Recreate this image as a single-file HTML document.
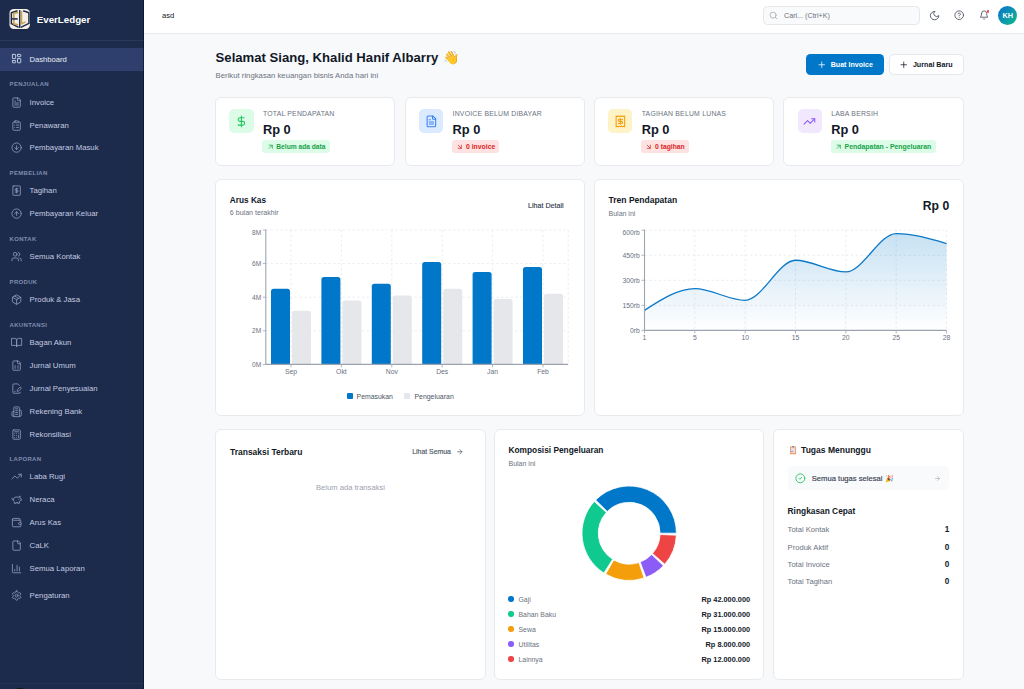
<!DOCTYPE html>
<html><head><meta charset="utf-8"><style>
html,body{margin:0;padding:0;}
body{width:1024px;height:689px;overflow:hidden;position:relative;background:#f8f9fb;font-family:"Liberation Sans",sans-serif;}
.t{position:absolute;white-space:nowrap;font-family:"Liberation Sans",sans-serif;}
svg{overflow:visible;}
</style></head><body>
<div style="position:absolute;left:0px;top:0px;width:144px;height:689px;box-sizing:border-box;background:#1c2a4b;"></div>
<div style="position:absolute;left:0px;top:40px;width:144px;height:1px;box-sizing:border-box;background:#2a3858;"></div>
<div style="position:absolute;left:0px;top:683px;width:144px;height:1px;box-sizing:border-box;background:#243253;"></div>
<div style="position:absolute;left:16px;top:687.5px;width:8px;height:3px;box-sizing:border-box;background:#141414;border-radius:50%;"></div>
<svg style="position:absolute;left:6px;top:6px" width="28" height="26" viewBox="0 0 742 689">
<rect x="92" y="78" width="543" height="532" rx="110" fill="#f4f0e6"/>
<path d="M305 128 L142 178 L142 468 L335 565" fill="none" stroke="#1d2b4d" stroke-width="40" stroke-linejoin="round"/>
<path d="M455 128 L608 178 L608 462 L392 568" fill="none" stroke="#1d2b4d" stroke-width="40" stroke-linejoin="round"/>
<rect x="345" y="108" width="38" height="474" fill="#1d2b4d"/>
<path d="M322 170 L208 198 L208 470 L322 500" fill="none" stroke="#c9a55a" stroke-width="44"/>
<rect x="160" y="322" width="150" height="40" fill="#1d2b4d"/>
<path d="M410 130 L410 470 L520 420" fill="none" stroke="#c9a55a" stroke-width="42"/>
</svg>
<div class="t" style="left:36.80px;top:15.00px;font-size:9.723px;line-height:9.723px;font-weight:700;color:#ffffff;letter-spacing:0px;">EverLedger</div>
<div style="position:absolute;left:0px;top:48px;width:144px;height:22.5px;box-sizing:border-box;background:#2e3f6e;"></div>
<svg style="position:absolute;left:11.2px;top:53.4px;" width="11.2" height="11.2" viewBox="0 0 24 24" fill="none" stroke="#c9d2e6" stroke-width="2" stroke-linecap="round" stroke-linejoin="round"><rect width="7" height="9" x="3" y="3" rx="1"/><rect width="7" height="5" x="14" y="3" rx="1"/><rect width="7" height="9" x="14" y="12" rx="1"/><rect width="7" height="5" x="3" y="16" rx="1"/></svg>
<div class="t" style="left:29.40px;top:56.00px;font-size:7.666px;line-height:7.666px;font-weight:400;color:#e8ecf5;letter-spacing:0px;">Dashboard</div>
<div class="t" style="left:9.60px;top:81.00px;font-size:6.000px;line-height:6.000px;font-weight:700;color:#7f8db0;letter-spacing:0.3px;">PENJUALAN</div>
<svg style="position:absolute;left:11.2px;top:97.2px;" width="11.2" height="11.2" viewBox="0 0 24 24" fill="none" stroke="#8e9bbd" stroke-width="1.8" stroke-linecap="round" stroke-linejoin="round"><path d="M15 2H6a2 2 0 0 0-2 2v16a2 2 0 0 0 2 2h12a2 2 0 0 0 2-2V7Z"/><path d="M14 2v4a2 2 0 0 0 2 2h4"/><path d="M10 9H8"/><path d="M16 13H8"/><path d="M16 17H8"/></svg>
<div class="t" style="left:29.60px;top:99.00px;font-size:7.750px;line-height:7.750px;font-weight:400;color:#c3cbe0;letter-spacing:0px;">Invoice</div>
<svg style="position:absolute;left:11.2px;top:119.8px;" width="11.2" height="11.2" viewBox="0 0 24 24" fill="none" stroke="#8e9bbd" stroke-width="1.8" stroke-linecap="round" stroke-linejoin="round"><rect width="8" height="4" x="8" y="2" rx="1" ry="1"/><path d="M16 4h2a2 2 0 0 1 2 2v14a2 2 0 0 1-2 2H6a2 2 0 0 1-2-2V6a2 2 0 0 1 2-2h2"/><path d="M12 11h4"/><path d="M12 16h4"/><path d="M8 11h.01"/><path d="M8 16h.01"/></svg>
<div class="t" style="left:29.60px;top:122.00px;font-size:7.750px;line-height:7.750px;font-weight:400;color:#c3cbe0;letter-spacing:0px;">Penawaran</div>
<svg style="position:absolute;left:11.2px;top:141.9px;" width="11.2" height="11.2" viewBox="0 0 24 24" fill="none" stroke="#8e9bbd" stroke-width="1.8" stroke-linecap="round" stroke-linejoin="round"><circle cx="12" cy="12" r="10"/><path d="M12 8v8"/><path d="m8 12 4 4 4-4"/></svg>
<div class="t" style="left:29.60px;top:144.00px;font-size:7.750px;line-height:7.750px;font-weight:400;color:#c3cbe0;letter-spacing:0px;">Pembayaran Masuk</div>
<div class="t" style="left:9.60px;top:170.00px;font-size:6.000px;line-height:6.000px;font-weight:700;color:#7f8db0;letter-spacing:0.3px;">PEMBELIAN</div>
<svg style="position:absolute;left:11.2px;top:185.2px;" width="11.2" height="11.2" viewBox="0 0 24 24" fill="none" stroke="#8e9bbd" stroke-width="1.8" stroke-linecap="round" stroke-linejoin="round"><rect x="4" y="2" width="16" height="20" rx="1"/><path d="M15 8h-4.5a1.8 1.8 0 1 0 0 3.6h3a1.8 1.8 0 1 1 0 3.6H9"/><path d="M12 17v-10"/></svg>
<div class="t" style="left:29.60px;top:187.00px;font-size:7.750px;line-height:7.750px;font-weight:400;color:#c3cbe0;letter-spacing:0px;">Tagihan</div>
<svg style="position:absolute;left:11.2px;top:208.4px;" width="11.2" height="11.2" viewBox="0 0 24 24" fill="none" stroke="#8e9bbd" stroke-width="1.8" stroke-linecap="round" stroke-linejoin="round"><circle cx="12" cy="12" r="10"/><path d="m16 12-4-4-4 4"/><path d="M12 16V8"/></svg>
<div class="t" style="left:29.60px;top:210.00px;font-size:7.750px;line-height:7.750px;font-weight:400;color:#c3cbe0;letter-spacing:0px;">Pembayaran Keluar</div>
<div class="t" style="left:9.60px;top:236.00px;font-size:6.000px;line-height:6.000px;font-weight:700;color:#7f8db0;letter-spacing:0.3px;">KONTAK</div>
<svg style="position:absolute;left:11.2px;top:251.20000000000002px;" width="11.2" height="11.2" viewBox="0 0 24 24" fill="none" stroke="#8e9bbd" stroke-width="1.8" stroke-linecap="round" stroke-linejoin="round"><path d="M16 21v-2a4 4 0 0 0-4-4H6a4 4 0 0 0-4 4v2"/><circle cx="9" cy="7" r="4"/><path d="M22 21v-2a4 4 0 0 0-3-3.87"/><path d="M16 3.13a4 4 0 0 1 0 7.75"/></svg>
<div class="t" style="left:29.60px;top:253.00px;font-size:7.750px;line-height:7.750px;font-weight:400;color:#c3cbe0;letter-spacing:0px;">Semua Kontak</div>
<div class="t" style="left:9.60px;top:279.00px;font-size:6.000px;line-height:6.000px;font-weight:700;color:#7f8db0;letter-spacing:0.3px;">PRODUK</div>
<svg style="position:absolute;left:11.2px;top:294.1px;" width="11.2" height="11.2" viewBox="0 0 24 24" fill="none" stroke="#8e9bbd" stroke-width="1.8" stroke-linecap="round" stroke-linejoin="round"><path d="m7.5 4.27 9 5.15"/><path d="M21 8a2 2 0 0 0-1-1.73l-7-4a2 2 0 0 0-2 0l-7 4A2 2 0 0 0 3 8v8a2 2 0 0 0 1 1.73l7 4a2 2 0 0 0 2 0l7-4A2 2 0 0 0 21 16Z"/><path d="m3.3 7 8.7 5 8.7-5"/><path d="M12 22V12"/></svg>
<div class="t" style="left:29.60px;top:296.00px;font-size:7.750px;line-height:7.750px;font-weight:400;color:#c3cbe0;letter-spacing:0px;">Produk &amp; Jasa</div>
<div class="t" style="left:9.60px;top:322.00px;font-size:6.000px;line-height:6.000px;font-weight:700;color:#7f8db0;letter-spacing:0.3px;">AKUNTANSI</div>
<svg style="position:absolute;left:11.2px;top:336.8px;" width="11.2" height="11.2" viewBox="0 0 24 24" fill="none" stroke="#8e9bbd" stroke-width="1.8" stroke-linecap="round" stroke-linejoin="round"><path d="M2 3h6a4 4 0 0 1 4 4v14a3 3 0 0 0-3-3H2z"/><path d="M22 3h-6a4 4 0 0 0-4 4v14a3 3 0 0 1 3-3h7z"/></svg>
<div class="t" style="left:29.60px;top:339.00px;font-size:7.750px;line-height:7.750px;font-weight:400;color:#c3cbe0;letter-spacing:0px;">Bagan Akun</div>
<svg style="position:absolute;left:11.2px;top:360.0px;" width="11.2" height="11.2" viewBox="0 0 24 24" fill="none" stroke="#8e9bbd" stroke-width="1.8" stroke-linecap="round" stroke-linejoin="round"><path d="M15 2H6a2 2 0 0 0-2 2v16a2 2 0 0 0 2 2h12a2 2 0 0 0 2-2V7Z"/><path d="M14 2v4a2 2 0 0 0 2 2h4"/><path d="M8 13h2"/><path d="M14 13h2"/><path d="M8 17h2"/><path d="M14 17h2"/></svg>
<div class="t" style="left:29.60px;top:362.00px;font-size:7.750px;line-height:7.750px;font-weight:400;color:#c3cbe0;letter-spacing:0px;">Jurnal Umum</div>
<svg style="position:absolute;left:11.2px;top:382.8px;" width="11.2" height="11.2" viewBox="0 0 24 24" fill="none" stroke="#8e9bbd" stroke-width="1.8" stroke-linecap="round" stroke-linejoin="round"><path d="m18 5-2.414-2.414A2 2 0 0 0 14.172 2H6a2 2 0 0 0-2 2v16a2 2 0 0 0 2 2h12a2 2 0 0 0 2-2"/><path d="M21.378 12.626a1 1 0 0 0-3.004-3.004l-4.01 4.012a2 2 0 0 0-.506.854l-.837 2.87a.5.5 0 0 0 .62.62l2.87-.837a2 2 0 0 0 .854-.506z"/><path d="M8 18h1"/></svg>
<div class="t" style="left:29.60px;top:385.00px;font-size:7.750px;line-height:7.750px;font-weight:400;color:#c3cbe0;letter-spacing:0px;">Jurnal Penyesuaian</div>
<svg style="position:absolute;left:11.2px;top:405.8px;" width="11.2" height="11.2" viewBox="0 0 24 24" fill="none" stroke="#8e9bbd" stroke-width="1.8" stroke-linecap="round" stroke-linejoin="round"><path d="M6 22V4a2 2 0 0 1 2-2h8a2 2 0 0 1 2 2v18Z"/><path d="M6 12H4a2 2 0 0 0-2 2v6a2 2 0 0 0 2 2h2"/><path d="M18 9h2a2 2 0 0 1 2 2v9a2 2 0 0 1-2 2h-2"/><path d="M10 6h4"/><path d="M10 10h4"/><path d="M10 14h4"/><path d="M10 18h4"/></svg>
<div class="t" style="left:29.60px;top:408.00px;font-size:7.750px;line-height:7.750px;font-weight:400;color:#c3cbe0;letter-spacing:0px;">Rekening Bank</div>
<svg style="position:absolute;left:11.2px;top:428.6px;" width="11.2" height="11.2" viewBox="0 0 24 24" fill="none" stroke="#8e9bbd" stroke-width="1.8" stroke-linecap="round" stroke-linejoin="round"><rect width="16" height="20" x="4" y="2" rx="2"/><line x1="8" x2="16" y1="6" y2="6"/><line x1="16" x2="16" y1="14" y2="18"/><path d="M16 10h.01"/><path d="M12 10h.01"/><path d="M8 10h.01"/><path d="M12 14h.01"/><path d="M8 14h.01"/><path d="M12 18h.01"/><path d="M8 18h.01"/></svg>
<div class="t" style="left:29.60px;top:431.00px;font-size:7.750px;line-height:7.750px;font-weight:400;color:#c3cbe0;letter-spacing:0px;">Rekonsiliasi</div>
<div class="t" style="left:9.60px;top:456.00px;font-size:6.000px;line-height:6.000px;font-weight:700;color:#7f8db0;letter-spacing:0.3px;">LAPORAN</div>
<svg style="position:absolute;left:11.2px;top:470.9px;" width="11.2" height="11.2" viewBox="0 0 24 24" fill="none" stroke="#8e9bbd" stroke-width="1.8" stroke-linecap="round" stroke-linejoin="round"><polyline points="22 7 13.5 15.5 8.5 10.5 2 17"/><polyline points="16 7 22 7 22 13"/></svg>
<div class="t" style="left:29.60px;top:473.00px;font-size:7.750px;line-height:7.750px;font-weight:400;color:#c3cbe0;letter-spacing:0px;">Laba Rugi</div>
<svg style="position:absolute;left:11.2px;top:494.2px;" width="11.2" height="11.2" viewBox="0 0 24 24" fill="none" stroke="#8e9bbd" stroke-width="1.8" stroke-linecap="round" stroke-linejoin="round"><path d="M19 5c-1.5 0-2.8 1.4-3 2-3.5-1.5-11-.3-11 5 0 1.8 0 3 2 4.5V20h4v-2h3v2h4v-4c1-.5 1.700-1 2-2h2v-4h-2c0-1-.5-1.5-1-2V5z"/><path d="M2 9v1c0 1.1.9 2 2 2h1"/><path d="M16 11h.01"/></svg>
<div class="t" style="left:29.60px;top:496.00px;font-size:7.750px;line-height:7.750px;font-weight:400;color:#c3cbe0;letter-spacing:0px;">Neraca</div>
<svg style="position:absolute;left:11.2px;top:517.1px;" width="11.2" height="11.2" viewBox="0 0 24 24" fill="none" stroke="#8e9bbd" stroke-width="1.8" stroke-linecap="round" stroke-linejoin="round"><path d="M19 7V4a1 1 0 0 0-1-1H5a2 2 0 0 0 0 4h15a1 1 0 0 1 1 1v4h-3a2 2 0 0 0 0 4h3a1 1 0 0 0 1-1v-2a1 1 0 0 0-1-1"/><path d="M3 5v14a2 2 0 0 0 2 2h15a1 1 0 0 0 1-1v-4"/></svg>
<div class="t" style="left:29.60px;top:519.00px;font-size:7.750px;line-height:7.750px;font-weight:400;color:#c3cbe0;letter-spacing:0px;">Arus Kas</div>
<svg style="position:absolute;left:11.2px;top:540.1px;" width="11.2" height="11.2" viewBox="0 0 24 24" fill="none" stroke="#8e9bbd" stroke-width="1.8" stroke-linecap="round" stroke-linejoin="round"><path d="M15 2H6a2 2 0 0 0-2 2v16a2 2 0 0 0 2 2h12a2 2 0 0 0 2-2V7Z"/><path d="M14 2v4a2 2 0 0 0 2 2h4"/></svg>
<div class="t" style="left:29.60px;top:542.00px;font-size:7.750px;line-height:7.750px;font-weight:400;color:#c3cbe0;letter-spacing:0px;">CaLK</div>
<svg style="position:absolute;left:11.2px;top:563.0px;" width="11.2" height="11.2" viewBox="0 0 24 24" fill="none" stroke="#8e9bbd" stroke-width="1.8" stroke-linecap="round" stroke-linejoin="round"><path d="M3 3v16a2 2 0 0 0 2 2h16"/><path d="M18 17V9"/><path d="M13 17V5"/><path d="M8 17v-3"/></svg>
<div class="t" style="left:29.60px;top:565.00px;font-size:7.750px;line-height:7.750px;font-weight:400;color:#c3cbe0;letter-spacing:0px;">Semua Laporan</div>
<svg style="position:absolute;left:11.2px;top:589.9px;" width="11.2" height="11.2" viewBox="0 0 24 24" fill="none" stroke="#8e9bbd" stroke-width="1.8" stroke-linecap="round" stroke-linejoin="round"><path d="M12.22 2h-.44a2 2 0 0 0-2 2v.18a2 2 0 0 1-1 1.73l-.43.25a2 2 0 0 1-2 0l-.15-.08a2 2 0 0 0-2.730.73l-.22.38a2 2 0 0 0 .73 2.730l.15.1a2 2 0 0 1 1 1.72v.51a2 2 0 0 1-1 1.74l-.15.09a2 2 0 0 0-.73 2.73l.22.38a2 2 0 0 0 2.73.73l.15-.08a2 2 0 0 1 2 0l.43.25a2 2 0 0 1 1 1.73V20a2 2 0 0 0 2 2h.44a2 2 0 0 0 2-2v-.18a2 2 0 0 1 1-1.73l.43-.25a2 2 0 0 1 2 0l.15.08a2 2 0 0 0 2.73-.73l.22-.39a2 2 0 0 0-.73-2.73l-.15-.08a2 2 0 0 1-1-1.74v-.5a2 2 0 0 1 1-1.74l.15-.09a2 2 0 0 0 .73-2.73l-.22-.38a2 2 0 0 0-2.73-.73l-.15.08a2 2 0 0 1-2 0l-.43-.25a2 2 0 0 1-1-1.73V4a2 2 0 0 0-2-2z"/><circle cx="12" cy="12" r="3"/></svg>
<div class="t" style="left:29.60px;top:592.00px;font-size:7.750px;line-height:7.750px;font-weight:400;color:#c3cbe0;letter-spacing:0px;">Pengaturan</div>
<div style="position:absolute;left:143px;top:0px;width:1px;height:689px;box-sizing:border-box;background:rgba(4,10,30,0.55);"></div>
<div style="position:absolute;left:144px;top:0px;width:880px;height:33px;box-sizing:border-box;background:#ffffff;"></div>
<div style="position:absolute;left:144px;top:33px;width:880px;height:1px;box-sizing:border-box;background:#e9ebef;"></div>
<div style="position:absolute;left:144px;top:34px;width:880px;height:655px;box-sizing:border-box;background:#f8f9fb;"></div>
<div class="t" style="left:162.00px;top:12.00px;font-size:7.600px;line-height:7.600px;font-weight:400;color:#111827;letter-spacing:0px;">asd</div>
<div style="position:absolute;left:763px;top:6px;width:156.5px;height:18.6px;box-sizing:border-box;background:#f9fafb;border:1px solid #e5e7eb;border-radius:4.5px;"></div>
<svg style="position:absolute;left:768.8px;top:11px;" width="9" height="9" viewBox="0 0 24 24" fill="none" stroke="#9ca3af" stroke-width="2" stroke-linecap="round" stroke-linejoin="round"><circle cx="11" cy="11" r="8"/><path d="m21 21-4.3-4.3"/></svg>
<div class="t" style="left:784.00px;top:13.00px;font-size:7.169px;line-height:7.169px;font-weight:400;color:#6b7280;letter-spacing:0px;">Cari... (Ctrl+K)</div>
<svg style="position:absolute;left:928.5px;top:9.5px;" width="11.2" height="11.2" viewBox="0 0 24 24" fill="none" stroke="#4b5563" stroke-width="2" stroke-linecap="round" stroke-linejoin="round"><path d="M12 3a6 6 0 0 0 9 9 9 9 0 1 1-9-9Z"/></svg>
<svg style="position:absolute;left:953.9px;top:10.3px;" width="10.4" height="10.4" viewBox="0 0 24 24" fill="none" stroke="#4b5563" stroke-width="2" stroke-linecap="round" stroke-linejoin="round"><circle cx="12" cy="12" r="10"/><path d="M9.09 9a3 3 0 0 1 5.83 1c0 2-3 3-3 3"/><path d="M12 17h.01"/></svg>
<svg style="position:absolute;left:978.8px;top:10.4px;" width="10.2" height="10.2" viewBox="0 0 24 24" fill="none" stroke="#4b5563" stroke-width="2" stroke-linecap="round" stroke-linejoin="round"><path d="M6 8a6 6 0 0 1 12 0c0 7 3 9 3 9H3s3-2 3-9"/><path d="M10.3 21a1.94 1.94 0 0 0 3.4 0"/></svg>
<div style="position:absolute;left:986.8px;top:10.0px;width:2.5px;height:2.5px;box-sizing:border-box;background:#ef4444;border-radius:50%;"></div>
<div style="position:absolute;left:998.1px;top:5.8px;width:19.2px;height:19.2px;box-sizing:border-box;background:linear-gradient(135deg,#0a6fd0 0%,#0ea5a0 70%,#10b981 100%);border-radius:50%;"></div>
<div class="t" style="left:1002.43px;top:12.00px;font-size:7.300px;line-height:7.300px;font-weight:700;color:#ffffff;letter-spacing:0px;">KH</div>
<div class="t" style="left:215.60px;top:51.00px;font-size:13.143px;line-height:13.143px;font-weight:700;color:#111827;letter-spacing:0px;">Selamat Siang, Khalid Hanif Albarry</div>
<div class="t" style="left:443px;top:49.5px;font-size:13.3px;line-height:16px;">&#128075;</div>
<div class="t" style="left:215.60px;top:72.00px;font-size:7.743px;line-height:7.743px;font-weight:400;color:#6b7280;letter-spacing:0px;">Berikut ringkasan keuangan bisnis Anda hari ini</div>
<div style="position:absolute;left:806.1px;top:54px;width:77.7px;height:20.9px;box-sizing:border-box;background:#0077c8;border-radius:4.5px;"></div>
<svg style="position:absolute;left:816.5px;top:59.9px;" width="9.5" height="9.5" viewBox="0 0 24 24" fill="none" stroke="#ffffff" stroke-width="1.9" stroke-linecap="round" stroke-linejoin="round"><path d="M5 12h14"/><path d="M12 5v14"/></svg>
<div class="t" style="left:830.70px;top:62.00px;font-size:7.115px;line-height:7.115px;font-weight:700;color:#ffffff;letter-spacing:0px;">Buat Invoice</div>
<div style="position:absolute;left:888.5px;top:54px;width:75.5px;height:21px;box-sizing:border-box;background:#ffffff;border:1px solid #e5e7eb;border-radius:4.5px;"></div>
<svg style="position:absolute;left:898.8px;top:59.9px;" width="9.5" height="9.5" viewBox="0 0 24 24" fill="none" stroke="#111827" stroke-width="1.9" stroke-linecap="round" stroke-linejoin="round"><path d="M5 12h14"/><path d="M12 5v14"/></svg>
<div class="t" style="left:912.90px;top:62.00px;font-size:7.162px;line-height:7.162px;font-weight:700;color:#111827;letter-spacing:0px;">Jurnal Baru</div>
<div style="position:absolute;left:215px;top:97px;width:180.05px;height:69px;box-sizing:border-box;background:#ffffff;border:1px solid #e8eaee;border-radius:6px;"></div>
<div style="position:absolute;left:229.3px;top:108.7px;width:24.4px;height:24.4px;box-sizing:border-box;background:#dcfce7;border-radius:5px;"></div>
<svg style="position:absolute;left:235.10000000000002px;top:114.5px;" width="12.8" height="12.8" viewBox="0 0 24 24" fill="none" stroke="#22c55e" stroke-width="2" stroke-linecap="round" stroke-linejoin="round"><line x1="12" x2="12" y1="2" y2="22"/><path d="M17 5H9.5a3.5 3.5 0 0 0 0 7h5a3.5 3.5 0 0 1 0 7H6"/></svg>
<div class="t" style="left:262.90px;top:111.00px;font-size:6.900px;line-height:6.900px;font-weight:400;color:#6b7280;letter-spacing:0.2px;">TOTAL PENDAPATAN</div>
<div class="t" style="left:262.90px;top:124.00px;font-size:12.830px;line-height:12.830px;font-weight:700;color:#111827;letter-spacing:0px;">Rp 0</div>
<div style="position:absolute;left:262.4px;top:140px;width:67.3px;height:12.6px;box-sizing:border-box;background:#dcfce7;border-radius:3px;"></div>
<svg style="position:absolute;left:266.5px;top:142.5px;" width="7.5" height="7.5" viewBox="0 0 24 24" fill="none" stroke="#16a34a" stroke-width="2.4" stroke-linecap="round" stroke-linejoin="round"><path d="M7 7h10v10"/><path d="M7 17 17 7"/></svg>
<div class="t" style="left:276.30px;top:144.00px;font-size:6.671px;line-height:6.671px;font-weight:700;color:#16a34a;letter-spacing:0px;">Belum ada data</div>
<div style="position:absolute;left:404.65px;top:97px;width:180.05px;height:69px;box-sizing:border-box;background:#ffffff;border:1px solid #e8eaee;border-radius:6px;"></div>
<div style="position:absolute;left:418.95px;top:108.7px;width:24.4px;height:24.4px;box-sizing:border-box;background:#dbeafe;border-radius:5px;"></div>
<svg style="position:absolute;left:424.75px;top:114.5px;" width="12.8" height="12.8" viewBox="0 0 24 24" fill="none" stroke="#3b82f6" stroke-width="2" stroke-linecap="round" stroke-linejoin="round"><path d="M15 2H6a2 2 0 0 0-2 2v16a2 2 0 0 0 2 2h12a2 2 0 0 0 2-2V7Z"/><path d="M14 2v4a2 2 0 0 0 2 2h4"/><path d="M10 9H8"/><path d="M16 13H8"/><path d="M16 17H8"/></svg>
<div class="t" style="left:452.55px;top:111.00px;font-size:6.900px;line-height:6.900px;font-weight:400;color:#6b7280;letter-spacing:0.2px;">INVOICE BELUM DIBAYAR</div>
<div class="t" style="left:452.55px;top:124.00px;font-size:12.830px;line-height:12.830px;font-weight:700;color:#111827;letter-spacing:0px;">Rp 0</div>
<div style="position:absolute;left:452.04999999999995px;top:140px;width:47.4px;height:12.6px;box-sizing:border-box;background:#fee2e2;border-radius:3px;"></div>
<svg style="position:absolute;left:456.15px;top:142.5px;" width="7.5" height="7.5" viewBox="0 0 24 24" fill="none" stroke="#dc2626" stroke-width="2.4" stroke-linecap="round" stroke-linejoin="round"><path d="m7 7 10 10"/><path d="M17 7v10H7"/></svg>
<div class="t" style="left:465.95px;top:144.00px;font-size:6.870px;line-height:6.870px;font-weight:700;color:#dc2626;letter-spacing:0px;">0 invoice</div>
<div style="position:absolute;left:593.8px;top:97px;width:180.3px;height:69px;box-sizing:border-box;background:#ffffff;border:1px solid #e8eaee;border-radius:6px;"></div>
<div style="position:absolute;left:608.0999999999999px;top:108.7px;width:24.4px;height:24.4px;box-sizing:border-box;background:#fef3c7;border-radius:5px;"></div>
<svg style="position:absolute;left:613.8999999999999px;top:114.5px;" width="12.8" height="12.8" viewBox="0 0 24 24" fill="none" stroke="#f59e0b" stroke-width="2" stroke-linecap="round" stroke-linejoin="round"><path d="M4 2v20l2-1 2 1 2-1 2 1 2-1 2 1 2-1 2 1V2l-2 1-2-1-2 1-2-1-2 1-2-1-2 1Z"/><path d="M16 8h-6a2 2 0 1 0 0 4h4a2 2 0 1 1 0 4H8"/><path d="M12 17.5v-11"/></svg>
<div class="t" style="left:641.70px;top:111.00px;font-size:6.900px;line-height:6.900px;font-weight:400;color:#6b7280;letter-spacing:0.2px;">TAGIHAN BELUM LUNAS</div>
<div class="t" style="left:641.70px;top:124.00px;font-size:12.830px;line-height:12.830px;font-weight:700;color:#111827;letter-spacing:0px;">Rp 0</div>
<div style="position:absolute;left:641.1999999999999px;top:140px;width:47.7px;height:12.6px;box-sizing:border-box;background:#fee2e2;border-radius:3px;"></div>
<svg style="position:absolute;left:645.3px;top:142.5px;" width="7.5" height="7.5" viewBox="0 0 24 24" fill="none" stroke="#dc2626" stroke-width="2.4" stroke-linecap="round" stroke-linejoin="round"><path d="m7 7 10 10"/><path d="M17 7v10H7"/></svg>
<div class="t" style="left:655.10px;top:144.00px;font-size:6.767px;line-height:6.767px;font-weight:700;color:#dc2626;letter-spacing:0px;">0 tagihan</div>
<div style="position:absolute;left:783.3px;top:97px;width:180.7px;height:69px;box-sizing:border-box;background:#ffffff;border:1px solid #e8eaee;border-radius:6px;"></div>
<div style="position:absolute;left:797.5999999999999px;top:108.7px;width:24.4px;height:24.4px;box-sizing:border-box;background:#f1e8fe;border-radius:5px;"></div>
<svg style="position:absolute;left:803.3999999999999px;top:114.5px;" width="12.8" height="12.8" viewBox="0 0 24 24" fill="none" stroke="#8b5cf6" stroke-width="2" stroke-linecap="round" stroke-linejoin="round"><polyline points="22 7 13.5 15.5 8.5 10.5 2 17"/><polyline points="16 7 22 7 22 13"/></svg>
<div class="t" style="left:831.20px;top:111.00px;font-size:6.900px;line-height:6.900px;font-weight:400;color:#6b7280;letter-spacing:0.2px;">LABA BERSIH</div>
<div class="t" style="left:831.20px;top:124.00px;font-size:12.830px;line-height:12.830px;font-weight:700;color:#111827;letter-spacing:0px;">Rp 0</div>
<div style="position:absolute;left:830.6999999999999px;top:140px;width:105px;height:12.6px;box-sizing:border-box;background:#dcfce7;border-radius:3px;"></div>
<svg style="position:absolute;left:834.8px;top:142.5px;" width="7.5" height="7.5" viewBox="0 0 24 24" fill="none" stroke="#16a34a" stroke-width="2.4" stroke-linecap="round" stroke-linejoin="round"><path d="M7 7h10v10"/><path d="M7 17 17 7"/></svg>
<div class="t" style="left:844.60px;top:144.00px;font-size:6.928px;line-height:6.928px;font-weight:700;color:#16a34a;letter-spacing:0px;">Pendapatan - Pengeluaran</div>
<div style="position:absolute;left:215px;top:179px;width:369.7px;height:237px;box-sizing:border-box;background:#ffffff;border:1px solid #e8eaee;border-radius:6px;"></div>
<div style="position:absolute;left:594.3px;top:179px;width:369.7px;height:237px;box-sizing:border-box;background:#ffffff;border:1px solid #e8eaee;border-radius:6px;"></div>
<div class="t" style="left:229.80px;top:197.00px;font-size:8.268px;line-height:8.268px;font-weight:700;color:#111827;letter-spacing:0px;">Arus Kas</div>
<div class="t" style="left:229.80px;top:210.00px;font-size:7.080px;line-height:7.080px;font-weight:400;color:#6b7280;letter-spacing:0px;">6 bulan terakhir</div>
<div class="t" style="left:528.00px;top:203.00px;font-size:7.116px;line-height:7.116px;font-weight:400;color:#374151;letter-spacing:0px;-webkit-text-stroke:0.15px #374151;">Lihat Detail</div>
<svg style="position:absolute;left:0;top:0" width="1024" height="689" viewBox="0 0 1024 689"><line x1="265.8" y1="230.0" x2="568.2" y2="230.0" stroke="#e6e8eb" stroke-width="0.8" stroke-dasharray="2.4 2.4"/><line x1="262.8" y1="230.0" x2="265.8" y2="230.0" stroke="#9ca3af" stroke-width="0.8"/><line x1="265.8" y1="263.6" x2="568.2" y2="263.6" stroke="#e6e8eb" stroke-width="0.8" stroke-dasharray="2.4 2.4"/><line x1="262.8" y1="263.6" x2="265.8" y2="263.6" stroke="#9ca3af" stroke-width="0.8"/><line x1="265.8" y1="297.2" x2="568.2" y2="297.2" stroke="#e6e8eb" stroke-width="0.8" stroke-dasharray="2.4 2.4"/><line x1="262.8" y1="297.2" x2="265.8" y2="297.2" stroke="#9ca3af" stroke-width="0.8"/><line x1="265.8" y1="330.79999999999995" x2="568.2" y2="330.79999999999995" stroke="#e6e8eb" stroke-width="0.8" stroke-dasharray="2.4 2.4"/><line x1="262.8" y1="330.79999999999995" x2="265.8" y2="330.79999999999995" stroke="#9ca3af" stroke-width="0.8"/><line x1="262.8" y1="364.4" x2="265.8" y2="364.4" stroke="#9ca3af" stroke-width="0.8"/><line x1="291.0" y1="230.0" x2="291.0" y2="364.4" stroke="#e6e8eb" stroke-width="0.8" stroke-dasharray="2.4 2.4"/><line x1="341.40000000000003" y1="230.0" x2="341.40000000000003" y2="364.4" stroke="#e6e8eb" stroke-width="0.8" stroke-dasharray="2.4 2.4"/><line x1="391.8" y1="230.0" x2="391.8" y2="364.4" stroke="#e6e8eb" stroke-width="0.8" stroke-dasharray="2.4 2.4"/><line x1="442.20000000000005" y1="230.0" x2="442.20000000000005" y2="364.4" stroke="#e6e8eb" stroke-width="0.8" stroke-dasharray="2.4 2.4"/><line x1="492.6" y1="230.0" x2="492.6" y2="364.4" stroke="#e6e8eb" stroke-width="0.8" stroke-dasharray="2.4 2.4"/><line x1="543.0" y1="230.0" x2="543.0" y2="364.4" stroke="#e6e8eb" stroke-width="0.8" stroke-dasharray="2.4 2.4"/><line x1="568.2" y1="230.0" x2="568.2" y2="364.4" stroke="#e6e8eb" stroke-width="0.8" stroke-dasharray="2.4 2.4"/><path d="M271.00,364.40 L271.00,291.40 Q271.00,288.80 273.60,288.80 L287.40,288.80 Q290.00,288.80 290.00,291.40 L290.00,364.40 Z" fill="#0077c8"/><path d="M292.00,364.40 L292.00,313.24 Q292.00,310.64 294.60,310.64 L308.40,310.64 Q311.00,310.64 311.00,313.24 L311.00,364.40 Z" fill="#e5e7eb"/><path d="M321.40,364.40 L321.40,279.64 Q321.40,277.04 324.00,277.04 L337.80,277.04 Q340.40,277.04 340.40,279.64 L340.40,364.40 Z" fill="#0077c8"/><path d="M342.40,364.40 L342.40,303.16 Q342.40,300.56 345.00,300.56 L358.80,300.56 Q361.40,300.56 361.40,303.16 L361.40,364.40 Z" fill="#e5e7eb"/><path d="M371.80,364.40 L371.80,286.36 Q371.80,283.76 374.40,283.76 L388.20,283.76 Q390.80,283.76 390.80,286.36 L390.80,364.40 Z" fill="#0077c8"/><path d="M392.80,364.40 L392.80,298.12 Q392.80,295.52 395.40,295.52 L409.20,295.52 Q411.80,295.52 411.80,298.12 L411.80,364.40 Z" fill="#e5e7eb"/><path d="M422.20,364.40 L422.20,264.52 Q422.20,261.92 424.80,261.92 L438.60,261.92 Q441.20,261.92 441.20,264.52 L441.20,364.40 Z" fill="#0077c8"/><path d="M443.20,364.40 L443.20,291.40 Q443.20,288.80 445.80,288.80 L459.60,288.80 Q462.20,288.80 462.20,291.40 L462.20,364.40 Z" fill="#e5e7eb"/><path d="M472.60,364.40 L472.60,274.60 Q472.60,272.00 475.20,272.00 L489.00,272.00 Q491.60,272.00 491.60,274.60 L491.60,364.40 Z" fill="#0077c8"/><path d="M493.60,364.40 L493.60,301.48 Q493.60,298.88 496.20,298.88 L510.00,298.88 Q512.60,298.88 512.60,301.48 L512.60,364.40 Z" fill="#e5e7eb"/><path d="M523.00,364.40 L523.00,269.56 Q523.00,266.96 525.60,266.96 L539.40,266.96 Q542.00,266.96 542.00,269.56 L542.00,364.40 Z" fill="#0077c8"/><path d="M544.00,364.40 L544.00,296.44 Q544.00,293.84 546.60,293.84 L560.40,293.84 Q563.00,293.84 563.00,296.44 L563.00,364.40 Z" fill="#e5e7eb"/><line x1="291.0" y1="364.4" x2="291.0" y2="367.4" stroke="#9ca3af" stroke-width="0.8"/><line x1="341.40000000000003" y1="364.4" x2="341.40000000000003" y2="367.4" stroke="#9ca3af" stroke-width="0.8"/><line x1="391.8" y1="364.4" x2="391.8" y2="367.4" stroke="#9ca3af" stroke-width="0.8"/><line x1="442.20000000000005" y1="364.4" x2="442.20000000000005" y2="367.4" stroke="#9ca3af" stroke-width="0.8"/><line x1="492.6" y1="364.4" x2="492.6" y2="367.4" stroke="#9ca3af" stroke-width="0.8"/><line x1="543.0" y1="364.4" x2="543.0" y2="367.4" stroke="#9ca3af" stroke-width="0.8"/><line x1="265.8" y1="229.4" x2="265.8" y2="364.4" stroke="#9ca3af" stroke-width="1.1"/><line x1="265.8" y1="364.4" x2="568.2" y2="364.4" stroke="#9ca3af" stroke-width="1.1"/><line x1="644.5" y1="230.2" x2="946.5" y2="230.2" stroke="#e6e8eb" stroke-width="0.8" stroke-dasharray="2.4 2.4"/><line x1="641.5" y1="230.2" x2="644.5" y2="230.2" stroke="#9ca3af" stroke-width="0.8"/><line x1="644.5" y1="255.25" x2="946.5" y2="255.25" stroke="#e6e8eb" stroke-width="0.8" stroke-dasharray="2.4 2.4"/><line x1="641.5" y1="255.25" x2="644.5" y2="255.25" stroke="#9ca3af" stroke-width="0.8"/><line x1="644.5" y1="280.29999999999995" x2="946.5" y2="280.29999999999995" stroke="#e6e8eb" stroke-width="0.8" stroke-dasharray="2.4 2.4"/><line x1="641.5" y1="280.29999999999995" x2="644.5" y2="280.29999999999995" stroke="#9ca3af" stroke-width="0.8"/><line x1="644.5" y1="305.34999999999997" x2="946.5" y2="305.34999999999997" stroke="#e6e8eb" stroke-width="0.8" stroke-dasharray="2.4 2.4"/><line x1="641.5" y1="305.34999999999997" x2="644.5" y2="305.34999999999997" stroke="#9ca3af" stroke-width="0.8"/><line x1="641.5" y1="330.4" x2="644.5" y2="330.4" stroke="#9ca3af" stroke-width="0.8"/><line x1="694.8333333333334" y1="230.2" x2="694.8333333333334" y2="330.4" stroke="#e6e8eb" stroke-width="0.8" stroke-dasharray="2.4 2.4"/><line x1="745.1666666666666" y1="230.2" x2="745.1666666666666" y2="330.4" stroke="#e6e8eb" stroke-width="0.8" stroke-dasharray="2.4 2.4"/><line x1="795.5" y1="230.2" x2="795.5" y2="330.4" stroke="#e6e8eb" stroke-width="0.8" stroke-dasharray="2.4 2.4"/><line x1="845.8333333333334" y1="230.2" x2="845.8333333333334" y2="330.4" stroke="#e6e8eb" stroke-width="0.8" stroke-dasharray="2.4 2.4"/><line x1="896.1666666666667" y1="230.2" x2="896.1666666666667" y2="330.4" stroke="#e6e8eb" stroke-width="0.8" stroke-dasharray="2.4 2.4"/><line x1="946.5" y1="230.2" x2="946.5" y2="330.4" stroke="#e6e8eb" stroke-width="0.8" stroke-dasharray="2.4 2.4"/><defs><linearGradient id="lg" x1="0" y1="0" x2="0" y2="1"><stop offset="0%" stop-color="#0077c8" stop-opacity="0.22"/><stop offset="100%" stop-color="#0077c8" stop-opacity="0.0"/></linearGradient></defs><path d="M644.50,310.36 C661.28,299.50 678.06,288.65 694.83,288.65 C711.61,288.65 728.39,300.34 745.17,300.34 C761.94,300.34 778.72,260.26 795.50,260.26 C812.28,260.26 829.06,271.95 845.83,271.95 C862.61,271.95 879.39,233.54 896.17,233.54 C912.94,233.54 929.72,238.55 946.50,243.56 L946.5,330.4 L644.5,330.4 Z" fill="url(#lg)"/><path d="M644.50,310.36 C661.28,299.50 678.06,288.65 694.83,288.65 C711.61,288.65 728.39,300.34 745.17,300.34 C761.94,300.34 778.72,260.26 795.50,260.26 C812.28,260.26 829.06,271.95 845.83,271.95 C862.61,271.95 879.39,233.54 896.17,233.54 C912.94,233.54 929.72,238.55 946.50,243.56" fill="none" stroke="#0a78c8" stroke-width="1.3"/><line x1="644.5" y1="330.4" x2="644.5" y2="333.4" stroke="#9ca3af" stroke-width="0.8"/><line x1="694.8333333333334" y1="330.4" x2="694.8333333333334" y2="333.4" stroke="#9ca3af" stroke-width="0.8"/><line x1="745.1666666666666" y1="330.4" x2="745.1666666666666" y2="333.4" stroke="#9ca3af" stroke-width="0.8"/><line x1="795.5" y1="330.4" x2="795.5" y2="333.4" stroke="#9ca3af" stroke-width="0.8"/><line x1="845.8333333333334" y1="330.4" x2="845.8333333333334" y2="333.4" stroke="#9ca3af" stroke-width="0.8"/><line x1="896.1666666666667" y1="330.4" x2="896.1666666666667" y2="333.4" stroke="#9ca3af" stroke-width="0.8"/><line x1="946.5" y1="330.4" x2="946.5" y2="333.4" stroke="#9ca3af" stroke-width="0.8"/><line x1="644.5" y1="229.6" x2="644.5" y2="330.4" stroke="#9ca3af" stroke-width="1.1"/><line x1="644.5" y1="330.4" x2="946.5" y2="330.4" stroke="#9ca3af" stroke-width="1.1"/></svg>
<div class="t" style="left:252.03px;top:230.00px;font-size:6.600px;line-height:6.600px;font-weight:400;color:#6b7280;letter-spacing:0px;">8M</div>
<div class="t" style="left:252.03px;top:261.00px;font-size:6.600px;line-height:6.600px;font-weight:400;color:#6b7280;letter-spacing:0px;">6M</div>
<div class="t" style="left:252.03px;top:295.00px;font-size:6.600px;line-height:6.600px;font-weight:400;color:#6b7280;letter-spacing:0px;">4M</div>
<div class="t" style="left:252.03px;top:328.00px;font-size:6.600px;line-height:6.600px;font-weight:400;color:#6b7280;letter-spacing:0px;">2M</div>
<div class="t" style="left:252.03px;top:362.00px;font-size:6.600px;line-height:6.600px;font-weight:400;color:#6b7280;letter-spacing:0px;">0M</div>
<div class="t" style="left:284.95px;top:369.00px;font-size:6.800px;line-height:6.800px;font-weight:400;color:#6b7280;letter-spacing:0px;">Sep</div>
<div class="t" style="left:336.11px;top:369.00px;font-size:6.800px;line-height:6.800px;font-weight:400;color:#6b7280;letter-spacing:0px;">Okt</div>
<div class="t" style="left:385.75px;top:369.00px;font-size:6.800px;line-height:6.800px;font-weight:400;color:#6b7280;letter-spacing:0px;">Nov</div>
<div class="t" style="left:436.15px;top:369.00px;font-size:6.800px;line-height:6.800px;font-weight:400;color:#6b7280;letter-spacing:0px;">Des</div>
<div class="t" style="left:487.12px;top:369.00px;font-size:6.800px;line-height:6.800px;font-weight:400;color:#6b7280;letter-spacing:0px;">Jan</div>
<div class="t" style="left:537.14px;top:369.00px;font-size:6.800px;line-height:6.800px;font-weight:400;color:#6b7280;letter-spacing:0px;">Feb</div>
<div style="position:absolute;left:346.9px;top:393.2px;width:6px;height:6.3px;box-sizing:border-box;background:#0077c8;border-radius:1px;"></div>
<div class="t" style="left:356.60px;top:394.00px;font-size:6.874px;line-height:6.874px;font-weight:400;color:#4b5563;letter-spacing:0px;">Pemasukan</div>
<div style="position:absolute;left:404px;top:393.2px;width:6.4px;height:6.3px;box-sizing:border-box;background:#e5e7eb;border-radius:1px;"></div>
<div class="t" style="left:414.40px;top:394.00px;font-size:6.948px;line-height:6.948px;font-weight:400;color:#4b5563;letter-spacing:0px;">Pengeluaran</div>
<div class="t" style="left:608.60px;top:196.00px;font-size:8.514px;line-height:8.514px;font-weight:700;color:#111827;letter-spacing:0px;">Tren Pendapatan</div>
<div class="t" style="left:608.60px;top:210.00px;font-size:6.987px;line-height:6.987px;font-weight:400;color:#6b7280;letter-spacing:0px;">Bulan ini</div>
<div class="t" style="left:922.80px;top:200.00px;font-size:12.183px;line-height:12.183px;font-weight:700;color:#111827;letter-spacing:0px;">Rp 0</div>
<div class="t" style="left:622.51px;top:230.00px;font-size:6.800px;line-height:6.800px;font-weight:400;color:#6b7280;letter-spacing:0px;">600rb</div>
<div class="t" style="left:622.51px;top:253.00px;font-size:6.800px;line-height:6.800px;font-weight:400;color:#6b7280;letter-spacing:0px;">450rb</div>
<div class="t" style="left:622.51px;top:278.00px;font-size:6.800px;line-height:6.800px;font-weight:400;color:#6b7280;letter-spacing:0px;">300rb</div>
<div class="t" style="left:622.51px;top:303.00px;font-size:6.800px;line-height:6.800px;font-weight:400;color:#6b7280;letter-spacing:0px;">150rb</div>
<div class="t" style="left:630.07px;top:328.00px;font-size:6.800px;line-height:6.800px;font-weight:400;color:#6b7280;letter-spacing:0px;">0rb</div>
<div class="t" style="left:642.61px;top:335.00px;font-size:6.800px;line-height:6.800px;font-weight:400;color:#6b7280;letter-spacing:0px;">1</div>
<div class="t" style="left:692.94px;top:335.00px;font-size:6.800px;line-height:6.800px;font-weight:400;color:#6b7280;letter-spacing:0px;">5</div>
<div class="t" style="left:741.39px;top:335.00px;font-size:6.800px;line-height:6.800px;font-weight:400;color:#6b7280;letter-spacing:0px;">10</div>
<div class="t" style="left:791.72px;top:335.00px;font-size:6.800px;line-height:6.800px;font-weight:400;color:#6b7280;letter-spacing:0px;">15</div>
<div class="t" style="left:842.05px;top:335.00px;font-size:6.800px;line-height:6.800px;font-weight:400;color:#6b7280;letter-spacing:0px;">20</div>
<div class="t" style="left:892.39px;top:335.00px;font-size:6.800px;line-height:6.800px;font-weight:400;color:#6b7280;letter-spacing:0px;">25</div>
<div class="t" style="left:942.72px;top:335.00px;font-size:6.800px;line-height:6.800px;font-weight:400;color:#6b7280;letter-spacing:0px;">28</div>
<div style="position:absolute;left:215px;top:429px;width:271px;height:251px;box-sizing:border-box;background:#ffffff;border:1px solid #e8eaee;border-radius:6px;"></div>
<div style="position:absolute;left:494px;top:429px;width:270px;height:251px;box-sizing:border-box;background:#ffffff;border:1px solid #e8eaee;border-radius:6px;"></div>
<div style="position:absolute;left:773px;top:429px;width:191px;height:251px;box-sizing:border-box;background:#ffffff;border:1px solid #e8eaee;border-radius:6px;"></div>
<div class="t" style="left:230.00px;top:448.00px;font-size:8.489px;line-height:8.489px;font-weight:700;color:#111827;letter-spacing:0px;">Transaksi Terbaru</div>
<div class="t" style="left:412.20px;top:449.00px;font-size:6.911px;line-height:6.911px;font-weight:400;color:#4b5563;letter-spacing:0px;-webkit-text-stroke:0.15px #4b5563;">Lihat Semua</div>
<svg style="position:absolute;left:456.4px;top:448.0px;" width="7.5" height="7.5" viewBox="0 0 24 24" fill="none" stroke="#4b5563" stroke-width="2.2" stroke-linecap="round" stroke-linejoin="round"><path d="M5 12h14"/><path d="m12 5 7 7-7 7"/></svg>
<div class="t" style="left:316.00px;top:484.00px;font-size:7.616px;line-height:7.616px;font-weight:400;color:#9ca3af;letter-spacing:0px;">Belum ada transaksi</div>
<div class="t" style="left:508.50px;top:446.00px;font-size:8.340px;line-height:8.340px;font-weight:700;color:#111827;letter-spacing:0px;">Komposisi Pengeluaran</div>
<div class="t" style="left:508.50px;top:460.00px;font-size:7.013px;line-height:7.013px;font-weight:400;color:#6b7280;letter-spacing:0px;">Bulan ini</div>
<svg style="position:absolute;left:0;top:0" width="1024" height="689" viewBox="0 0 1024 689"><path d="M676.40,533.20 A47.2,47.2 0 0 0 595.63,500.02 L607.22,511.48 A30.9,30.9 0 0 1 660.10,533.20 Z" fill="#0077c8" stroke="#fff" stroke-width="0.8"/><path d="M594.27,501.45 A47.2,47.2 0 0 0 603.92,573.06 L612.65,559.30 A30.9,30.9 0 0 1 606.33,512.42 Z" fill="#10c98f" stroke="#fff" stroke-width="0.8"/><path d="M605.62,574.09 A47.2,47.2 0 0 0 644.06,578.00 L638.93,562.53 A30.9,30.9 0 0 1 613.76,559.97 Z" fill="#f59e0b" stroke="#fff" stroke-width="0.8"/><path d="M645.93,577.34 A47.2,47.2 0 0 0 663.46,565.67 L651.63,554.46 A30.9,30.9 0 0 1 640.15,562.09 Z" fill="#8b5cf6" stroke="#fff" stroke-width="0.8"/><path d="M664.79,564.21 A47.2,47.2 0 0 0 676.36,535.18 L660.07,534.49 A30.9,30.9 0 0 1 652.50,553.50 Z" fill="#ef4444" stroke="#fff" stroke-width="0.8"/></svg>
<div style="position:absolute;left:508.4px;top:596.2px;width:5.6px;height:5.6px;box-sizing:border-box;background:#0077c8;border-radius:50%;"></div>
<div class="t" style="left:518.50px;top:597.00px;font-size:6.900px;line-height:6.900px;font-weight:400;color:#6b7280;letter-spacing:0px;">Gaji</div>
<div class="t" style="left:701.48px;top:596.00px;font-size:7.350px;line-height:7.350px;font-weight:700;color:#111827;letter-spacing:0px;">Rp 42.000.000</div>
<div style="position:absolute;left:508.4px;top:611.2700000000001px;width:5.6px;height:5.6px;box-sizing:border-box;background:#10c98f;border-radius:50%;"></div>
<div class="t" style="left:518.50px;top:612.00px;font-size:6.900px;line-height:6.900px;font-weight:400;color:#6b7280;letter-spacing:0px;">Bahan Baku</div>
<div class="t" style="left:701.48px;top:611.00px;font-size:7.350px;line-height:7.350px;font-weight:700;color:#111827;letter-spacing:0px;">Rp 31.000.000</div>
<div style="position:absolute;left:508.4px;top:626.34px;width:5.6px;height:5.6px;box-sizing:border-box;background:#f59e0b;border-radius:50%;"></div>
<div class="t" style="left:518.50px;top:627.00px;font-size:6.900px;line-height:6.900px;font-weight:400;color:#6b7280;letter-spacing:0px;">Sewa</div>
<div class="t" style="left:701.48px;top:626.00px;font-size:7.350px;line-height:7.350px;font-weight:700;color:#111827;letter-spacing:0px;">Rp 15.000.000</div>
<div style="position:absolute;left:508.4px;top:641.4100000000001px;width:5.6px;height:5.6px;box-sizing:border-box;background:#8b5cf6;border-radius:50%;"></div>
<div class="t" style="left:518.50px;top:642.00px;font-size:6.900px;line-height:6.900px;font-weight:400;color:#6b7280;letter-spacing:0px;">Utilitas</div>
<div class="t" style="left:705.57px;top:641.00px;font-size:7.350px;line-height:7.350px;font-weight:700;color:#111827;letter-spacing:0px;">Rp 8.000.000</div>
<div style="position:absolute;left:508.4px;top:656.48px;width:5.6px;height:5.6px;box-sizing:border-box;background:#ef4444;border-radius:50%;"></div>
<div class="t" style="left:518.50px;top:657.00px;font-size:6.900px;line-height:6.900px;font-weight:400;color:#6b7280;letter-spacing:0px;">Lainnya</div>
<div class="t" style="left:701.48px;top:656.00px;font-size:7.350px;line-height:7.350px;font-weight:700;color:#111827;letter-spacing:0px;">Rp 12.000.000</div>
<svg style="position:absolute;left:789.8px;top:445.6px" width="6.1" height="8.3" viewBox="0 0 64 86"><rect x="0" y="4" width="64" height="82" rx="6" fill="#ef8f3a"/><rect x="8" y="12" width="48" height="64" fill="#e4ddf0"/><rect x="20" y="0" width="24" height="14" rx="3" fill="#8f8aa0"/><rect x="12" y="56" width="22" height="6" fill="#6e6a80"/></svg>
<div class="t" style="left:801.10px;top:446.00px;font-size:8.535px;line-height:8.535px;font-weight:700;color:#111827;letter-spacing:0px;">Tugas Menunggu</div>
<div style="position:absolute;left:787.6px;top:466.3px;width:161.6px;height:23.7px;box-sizing:border-box;background:#f9fafb;border-radius:4.5px;"></div>
<svg style="position:absolute;left:794.8px;top:472.7px;" width="10.7" height="10.7" viewBox="0 0 24 24" fill="none" stroke="#22c55e" stroke-width="2" stroke-linecap="round" stroke-linejoin="round"><circle cx="12" cy="12" r="10"/><path d="m9 12 2 2 4-4"/></svg>
<div class="t" style="left:811.80px;top:475.00px;font-size:7.627px;line-height:7.627px;font-weight:400;color:#374151;letter-spacing:0px;-webkit-text-stroke:0.15px #374151;">Semua tugas selesai</div>
<div class="t" style="left:885px;top:474px;font-size:7px;line-height:9px;">&#127881;</div>
<svg style="position:absolute;left:934px;top:474.6px;" width="7" height="7" viewBox="0 0 24 24" fill="none" stroke="#9ca3af" stroke-width="2" stroke-linecap="round" stroke-linejoin="round"><path d="M5 12h14"/><path d="m12 5 7 7-7 7"/></svg>
<div class="t" style="left:787.60px;top:507.00px;font-size:8.357px;line-height:8.357px;font-weight:700;color:#111827;letter-spacing:0px;">Ringkasan Cepat</div>
<div class="t" style="left:787.60px;top:526.00px;font-size:7.600px;line-height:7.600px;font-weight:400;color:#6b7280;letter-spacing:0px;">Total Kontak</div>
<div class="t" style="left:944.64px;top:526.00px;font-size:8.200px;line-height:8.200px;font-weight:700;color:#111827;letter-spacing:0px;">1</div>
<div class="t" style="left:787.60px;top:544.00px;font-size:7.600px;line-height:7.600px;font-weight:400;color:#6b7280;letter-spacing:0px;">Produk Aktif</div>
<div class="t" style="left:944.64px;top:544.00px;font-size:8.200px;line-height:8.200px;font-weight:700;color:#111827;letter-spacing:0px;">0</div>
<div class="t" style="left:787.60px;top:561.00px;font-size:7.600px;line-height:7.600px;font-weight:400;color:#6b7280;letter-spacing:0px;">Total Invoice</div>
<div class="t" style="left:944.64px;top:561.00px;font-size:8.200px;line-height:8.200px;font-weight:700;color:#111827;letter-spacing:0px;">0</div>
<div class="t" style="left:787.60px;top:578.00px;font-size:7.600px;line-height:7.600px;font-weight:400;color:#6b7280;letter-spacing:0px;">Total Tagihan</div>
<div class="t" style="left:944.64px;top:578.00px;font-size:8.200px;line-height:8.200px;font-weight:700;color:#111827;letter-spacing:0px;">0</div>
</body></html>
